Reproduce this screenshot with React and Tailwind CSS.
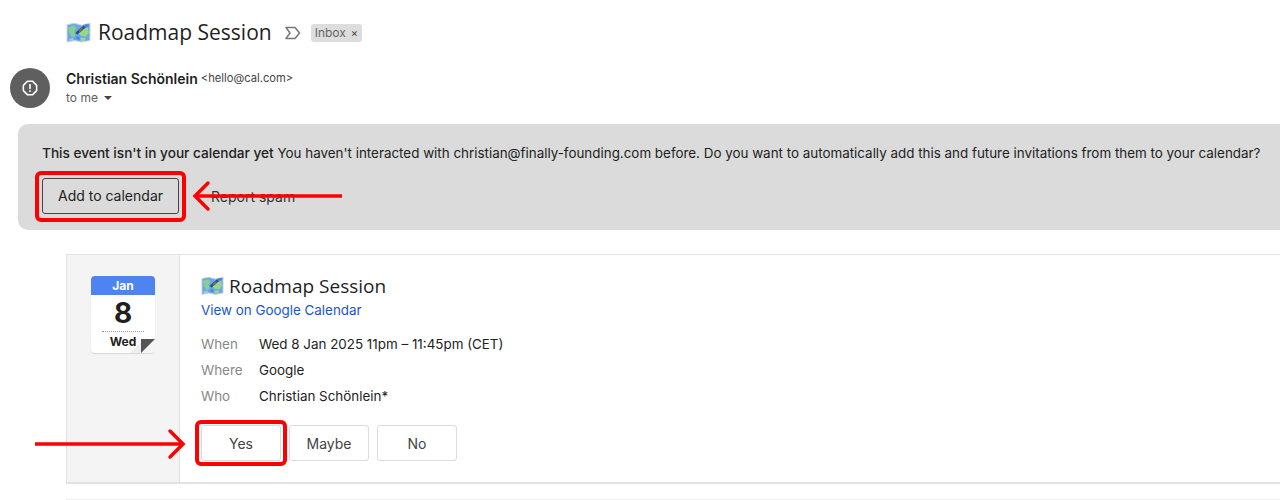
import React from "react";

function MapIcon({ size = 24 }) {
  return (
    <svg width={size} height={size * 0.85} viewBox="0 0 24 20" className="shrink-0">
      <path d="M1 2.5 L8 1 L15 3 L23 1 L23 17.5 L15 19 L8 17.5 L1 19 Z" fill="#6aa6ea" stroke="#ccd2da" strokeWidth="1" />
      <path d="M2 5 L8 3 L10 6 L8 9 L9 13 L6 15 L3 10 Z" fill="#84d08f" />
      <path d="M14 7 L21 5 L22 10 L19 14 L14 13 L12 10 Z" fill="#96d68c" />
      <path d="M9 10 L17 3 L19 5 L14 9 L11 12 Z" fill="#28508f" />
      <path d="M12 7 L16 5 L16 8 L13 10 Z" fill="#7a6a58" />
      <path d="M14 15 L19 15 L18 18 L14 18 Z" fill="#9bd39a" />
      <path d="M3 16 L7 15 L7 17 L3 18 Z" fill="#9fc8f2" />
      <path d="M18 2 L22 2 L22 4 L18 5 Z" fill="#4d86d6" />
      <path d="M10 14 L13 14 L13 17 L10 16 Z" fill="#4d86d6" />
    </svg>
  );
}

function Arrow({ className, flip, width }) {
  return (
    <svg width={width} height="34" viewBox={`0 0 ${width} 34`} className={className}>
      <g fill="none" stroke="#fe0000" strokeWidth="3.5" strokeLinecap="round" strokeLinejoin="miter">
        {flip ? (
          <>
            <path d={`M${width} 17 H4`} strokeLinecap="butt" />
            <path d="M17 4 L4 17 L17 30" />
          </>
        ) : (
          <>
            <path d={`M0 17 H${width - 4}`} strokeLinecap="butt" />
            <path d={`M${width - 17} 4 L${width - 4} 17 L${width - 17} 30`} />
          </>
        )}
      </g>
    </svg>
  );
}

function Row({ label, value }) {
  return (
    <div className="flex h-[26px] items-center text-[13.4px]">
      <span className="w-[58px] text-[#888888]">{label}</span>
      <span className="text-[#222222]">{value}</span>
    </div>
  );
}

function RsvpButton({ children }) {
  return (
    <button className="flex h-[36px] w-[80px] items-center justify-center rounded-[3px] border border-[#dcdcdc] bg-white text-[14px] text-[#444444]">
      {children}
    </button>
  );
}

export default function App() {
  return (
    <div className="relative h-[500px] w-full overflow-hidden bg-white font-['Inter',sans-serif]">
      <div className="flex h-[64px] items-center pl-[66px] pt-[2px]">
        <MapIcon size={25} />
        <h1 className="ml-[7px] font-['Open_Sans',sans-serif] text-[21px] text-[#1f1f1f]">Roadmap Session</h1>
        <svg width="16" height="14" viewBox="0 0 16 14" className="ml-[13px]">
          <path d="M1 1.5 H10 L14.5 7 L10 12.5 H1 L5 7 Z" fill="none" stroke="#777777" strokeWidth="1.5" strokeLinejoin="round" />
        </svg>
        <span className="ml-[10px] flex h-[18px] items-center gap-[5px] rounded-[3px] bg-[#dddddd] px-[4px] text-[12px] text-[#666666]">
          Inbox <span className="text-[11px] leading-none text-[#444444]">×</span>
        </span>
      </div>

      <div className="flex h-[60px] pl-[10px]">
        <div className="mt-[4px] flex h-[40px] w-[40px] items-center justify-center rounded-full bg-[#5f5f5f]">
          <svg width="16" height="16" viewBox="0 0 16 16">
            <path d="M5.2 1 H10.8 L15 5.2 V10.8 L10.8 15 H5.2 L1 10.8 V5.2 Z" fill="none" stroke="#ffffff" strokeWidth="1.6" strokeLinejoin="round" transform="translate(0.4 0.4) scale(0.95)" />
            <rect x="7.2" y="4" width="1.6" height="5" fill="#ffffff" />
            <rect x="7.2" y="10.2" width="1.6" height="1.7" fill="#ffffff" />
          </svg>
        </div>
        <div className="ml-[16px] flex flex-col">
          <div className="mt-[6px] flex h-[16px] items-center">
            <span className="text-[14px] font-semibold text-[#1f1f1f]">Christian Schönlein</span>
            <span className="ml-[3px] text-[11.2px] text-[#444444]">&lt;hello@cal.com&gt;</span>
          </div>
          <div className="mt-[4px] flex h-[16px] items-center text-[12px] text-[#5e5e5e]">
            to me
            <span className="ml-[6px] h-0 w-0 border-x-[4px] border-t-[4px] border-x-transparent border-t-[#444444]" />
          </div>
        </div>
      </div>

      <div className="ml-[18px] h-[106px] w-[1300px] rounded-l-[10px] bg-[#dbdbdb] pl-[24px]">
        <p className="whitespace-nowrap pt-[20px] text-[13.4px] leading-[18px] text-[#222222]">
          <span className="text-[13.65px] font-medium">This event isn't in your calendar yet</span> You haven't interacted with christian@finally-founding.com before. Do you want to automatically add this and future invitations from them to your calendar?
        </p>
        <div className="mt-[16px] flex items-center">
          <button className="flex h-[36px] w-[137px] items-center justify-center rounded-[3px] border border-[#444444] pb-[1px] text-[14px] text-[#222222]">
            Add to calendar
          </button>
          <span className="ml-[32px] text-[14px] text-[#333333]">Report spam</span>
        </div>
      </div>

      <div className="ml-[66px] mt-[24px] flex h-[230px] w-[1250px] border border-b-2 border-[#e2e2e2]">
        <div className="w-[113px] shrink-0 border-r border-[#e2e2e2] bg-[#f4f4f4] pl-[24px] pt-[21px]">
          <div className="relative h-[77px] w-[64px] overflow-hidden rounded-[4px] bg-white shadow-[0_1px_1px_rgba(0,0,0,0.12)]">
            <div className="flex h-[19px] items-center justify-center bg-[#4f83f1] text-[12px] font-bold text-white">Jan</div>
            <div className="flex h-[36px] items-center justify-center text-[28px] font-bold leading-none text-[#1f1f1f]">8</div>
            <div className="mx-[11px] border-t border-dotted border-[#999999]" />
            <div className="pt-[2px] text-center text-[12px] font-bold leading-[16px] text-[#222222]">Wed</div>
            <svg width="28" height="14" viewBox="0 0 28 14" className="absolute bottom-0 right-0">
              <path d="M14 14 L28 14 L28 0 Z" fill="#f4f4f4" />
              <path d="M14 0 L28 0 L14 14 Z" fill="#555555" />
              <path d="M14 3 L14 14 L3 14 Z" fill="#eeeeee" />
            </svg>
          </div>
        </div>
        <div className="pl-[21px] pt-[19px]">
          <div className="flex h-[24px] items-center">
            <MapIcon size={23} />
            <span className="ml-[5px] font-['Open_Sans',sans-serif] text-[19px] text-[#1f1f1f]">Roadmap Session</span>
          </div>
          <a className="mt-[2px] block h-[20px] text-[13.4px] leading-[20px] text-[#1a56c9]">View on Google Calendar</a>
          <div className="mt-[11px] flex flex-col">
            <Row label="When" value="Wed 8 Jan 2025 11pm – 11:45pm (CET)" />
            <Row label="Where" value="Google" />
            <Row label="Who" value="Christian Schönlein*" />
          </div>
          <div className="mt-[16px] flex gap-[8px]">
            <RsvpButton>Yes</RsvpButton>
            <RsvpButton>Maybe</RsvpButton>
            <RsvpButton>No</RsvpButton>
          </div>
        </div>
      </div>

      <div className="ml-[66px] mt-[15px] h-px bg-[#eeeeee]" />

      <div className="absolute left-[35px] top-[171px] h-[51px] w-[151px] rounded-[6px] border-4 border-[#fe0000]" />
      <Arrow flip width={151} className="absolute left-[191px] top-[179px]" />
      <div className="absolute left-[195px] top-[420px] h-[46px] w-[92px] rounded-[6px] border-4 border-[#fe0000]" />
      <Arrow width={152} className="absolute left-[35px] top-[427px]" />
    </div>
  );
}
